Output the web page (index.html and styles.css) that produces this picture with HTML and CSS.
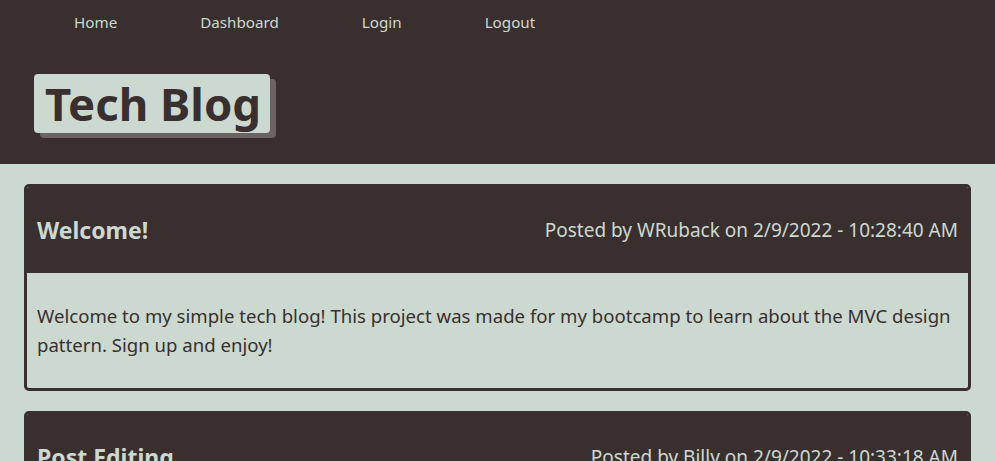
FILE: index.html
```html
<!DOCTYPE html>
<html lang="en">
<head>
<meta charset="utf-8">
<title>Tech Blog</title>
<link rel="stylesheet" href="styles.css">
</head>
<body>
<header class="site-header">
  <nav class="nav">
    <a class="nav-link" href="#">Home</a>
    <a class="nav-link" href="#">Dashboard</a>
    <a class="nav-link" href="#">Login</a>
    <a class="nav-link" href="#">Logout</a>
  </nav>
  <h1 class="brand">Tech Blog</h1>
</header>
<main class="posts">
  <article class="post">
    <div class="post-head">
      <h2 class="post-title">Welcome!</h2>
      <p class="post-meta">Posted by WRuback on 2/9/2022 - 10:28:40 AM</p>
    </div>
    <div class="post-body">
      <p>Welcome to my simple tech blog! This project was made for my bootcamp to learn about the MVC design pattern. Sign up and enjoy!</p>
    </div>
  </article>
  <article class="post">
    <div class="post-head">
      <h2 class="post-title">Post Editing</h2>
      <p class="post-meta">Posted by Billy on 2/9/2022 - 10:33:18 AM</p>
    </div>
    <div class="post-body">
      <p>Editing posts is now possible from the dashboard.</p>
    </div>
  </article>
</main>
</body>
</html>
```

FILE: styles.css
```css
* { box-sizing: border-box; }
html, body { margin: 0; padding: 0; }
body {
  background: #ccd9d0;
  font-family: "Noto Sans", "DejaVu Sans", sans-serif;
  color: #392f2f;
}
.site-header {
  background: #392f2f;
  height: 164px;
  padding: 0 0 0 34px;
}
.nav {
  display: flex;
  gap: 83px;
  padding: 11px 0 0 40px;
  height: 45px;
}
.nav-link {
  color: #ccd9d0;
  text-decoration: none;
  font-size: 15.2px;
  line-height: 22px;
}
.brand {
  display: inline-block;
  margin: 29px 0 0 0;
  background: #ccd9d0;
  color: #392f2f;
  font-size: 45.5px;
  font-weight: 700;
  line-height: 59px;
  height: 59px;
  padding: 0 9px 0 11px;
  border-radius: 4px;
  box-shadow: 6px 5px 0 #6b6362;
}
.posts {
  padding: 20px 24px;
  display: flex;
  flex-direction: column;
  gap: 20px;
}
.post {
  border: 3px solid #392f2f;
  border-radius: 5px;
  overflow: hidden;
}
.post-head {
  background: #392f2f;
  color: #ccd9d0;
  display: flex;
  justify-content: space-between;
  align-items: center;
  height: 86px;
  padding: 0 10px;
}
.post-title {
  margin: 0;
  font-size: 23px;
  font-weight: 700;
}
.post-meta {
  margin: 0;
  font-size: 19px;
}
.post-body {
  padding: 28px 10px 29px;
}
.post-body p {
  margin: 0;
  font-size: 18.6px;
  line-height: 29px;
}
```
